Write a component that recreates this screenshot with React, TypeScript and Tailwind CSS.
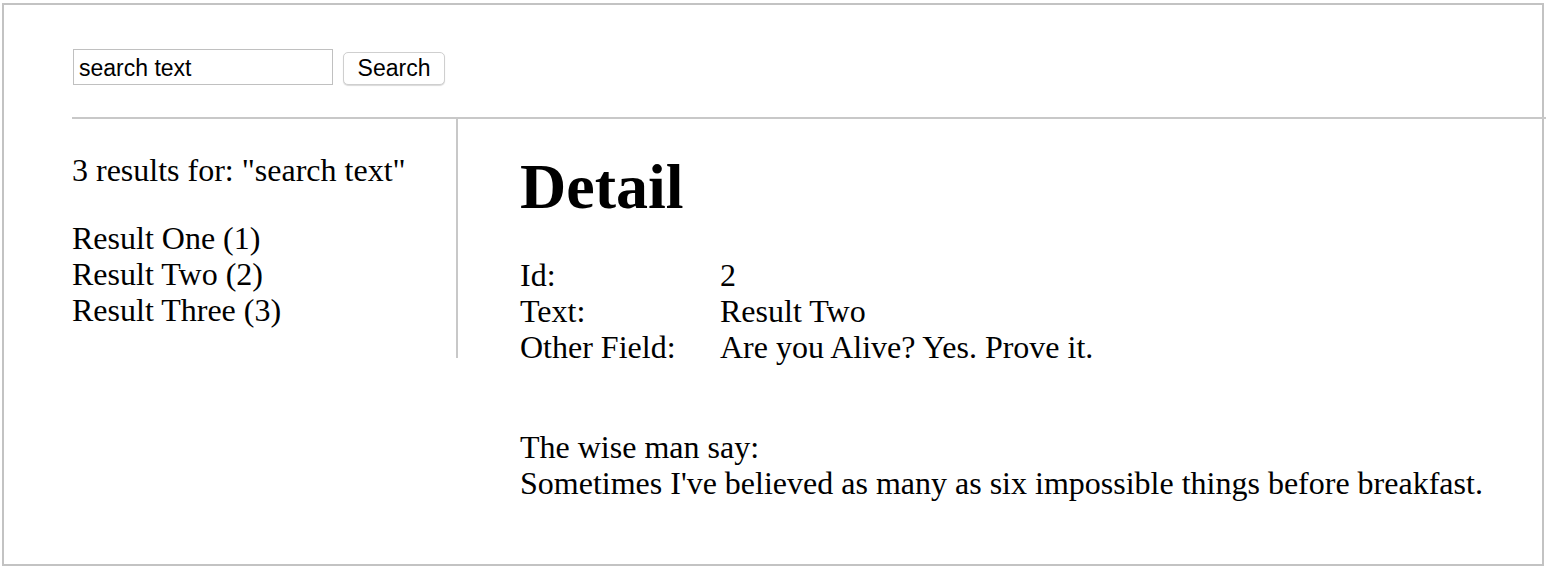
const results = [
  { id: 1, text: "Result One" },
  { id: 2, text: "Result Two" },
  { id: 3, text: "Result Three" },
]

const fields = [
  { label: "Id:", value: "2" },
  { label: "Text:", value: "Result Two" },
  { label: "Other Field:", value: "Are you Alive? Yes. Prove it." },
]

export default function App() {
  return (
    <div className="h-[570px] w-[1546px] overflow-hidden bg-white pl-[2px] pt-[3px] font-['Liberation_Serif',serif] text-black">
      <div className="h-[563px] w-[1542px] border-2 border-[#c3c3c3]">
        {/* search bar */}
        <div className="flex h-[112px] items-start gap-[10px] pl-[69px] pt-[44px]">
          <input
            defaultValue="search text"
            className="h-[36px] w-[260px] border border-[#c0c0c0] px-[5px] pt-[2px] font-['Liberation_Sans',Arial,sans-serif] text-[23px] outline-none"
          />
          <button className="mt-[3px] flex h-[33px] w-[102px] items-start justify-center rounded-[5px] border border-[#cfcfcf] bg-white pt-[3px] font-['Liberation_Sans',Arial,sans-serif] text-[23px] leading-[24px] shadow-[0_1px_1px_rgba(0,0,0,0.15)]">
            Search
          </button>
        </div>

        <div className="ml-[68px] w-[1476px] border-t-2 border-[#c8c8c8]" />

        <div className="ml-[68px] flex">
          {/* result list */}
          <div className="h-[239px] w-[386px] shrink-0 border-r-2 border-[#c8c8c8] pt-[33px] text-[32px] leading-[36px]">
            <p>3 results for: "search text"</p>
            <ul className="mt-[32px]">
              {results.map((r) => (
                <li key={r.id}>
                  {r.text} ({r.id})
                </li>
              ))}
            </ul>
          </div>

          {/* detail */}
          <div className="pl-[62px] pt-[30px] text-[32px] leading-[36px]">
            <h1 className="text-[64px] font-bold leading-[76px]">Detail</h1>
            <div className="mt-[32px] grid grid-cols-[200px_auto]">
              {fields.map((f) => (
                <div key={f.label} className="contents">
                  <span>{f.label}</span>
                  <span>{f.value}</span>
                </div>
              ))}
            </div>
            <div className="mt-[64px]">
              <p>The wise man say:</p>
              <p>Sometimes I've believed as many as six impossible things before breakfast.</p>
            </div>
          </div>
        </div>
      </div>
    </div>
  )
}
